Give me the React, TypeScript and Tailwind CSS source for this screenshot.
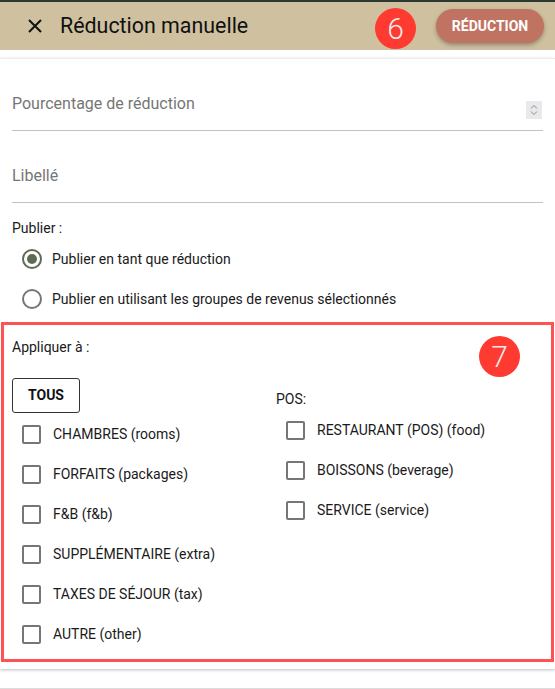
import React from "react";

const leftItems = [
  "CHAMBRES (rooms)",
  "FORFAITS (packages)",
  "F&B (f&b)",
  "SUPPLÉMENTAIRE (extra)",
  "TAXES DE SÉJOUR (tax)",
  "AUTRE (other)",
];
const rightItems = ["RESTAURANT (POS) (food)", "BOISSONS (beverage)", "SERVICE (service)"];

function Checkbox({ label }: { label: string }) {
  return (
    <div className="h-[40px] flex items-center">
      <div className="ml-[10px] w-[19px] h-[19px] border-2 border-[#767676] rounded-[2px] box-border" />
      <span className="ml-[12px] text-[14px] text-[#1a1a1a]">{label}</span>
    </div>
  );
}

function Badge({ n }: { n: string }) {
  return (
    <div className="w-[41px] h-[41px] rounded-full bg-[#ff3a30] flex items-center justify-center text-[#ececec] text-[30px] leading-none font-light">
      {n}
    </div>
  );
}

export default function App() {
  return (
    <div
      className="w-[555px] h-[689px] bg-white overflow-hidden relative"
      style={{ fontFamily: "Roboto, 'Liberation Sans', sans-serif" }}
    >
      <div className="h-[2px] bg-[#2e3832]" />
      <div className="h-[48px] bg-[#cfc09f] flex items-center">
        <svg className="ml-[28px]" width="14" height="14" viewBox="0 0 14 14">
          <path d="M1 1L13 13M13 1L1 13" stroke="#111" strokeWidth="2" />
        </svg>
        <span className="ml-[18px] text-[21.4px] text-[#111]">Réduction manuelle</span>
        <div className="absolute left-[375px] top-[8px]">
          <Badge n="6" />
        </div>
        <button className="absolute left-[436px] top-[9px] w-[108px] h-[34px] rounded-full bg-[#c07360] text-white text-[14px] font-bold shadow-[0_2px_4px_rgba(0,0,0,0.3)]">
          RÉDUCTION
        </button>
      </div>
      <div className="h-[8px]" />
      <div className="border-t border-[#ececec] shadow-[0_1px_3px_rgba(0,0,0,0.25)] h-[611px] flex flex-col">
        <div className="mx-[12px] mt-[32px] h-[40px] pt-[1px] border-b border-[#c2c2c2] flex items-start justify-between">
          <span className="text-[16px] text-[#767676] leading-[24px]">Pourcentage de réduction</span>
          <div className="mt-[9px] mr-[1px] w-[16px] h-[18px] bg-[#e9e9ec] flex flex-col items-center justify-center gap-[2px]">
            <svg width="8" height="5" viewBox="0 0 8 5">
              <path d="M1 4.5L4 1.5L7 4.5" stroke="#8a8a8a" strokeWidth="1" fill="none" />
            </svg>
            <svg width="8" height="5" viewBox="0 0 8 5">
              <path d="M1 0.5L4 3.5L7 0.5" stroke="#8a8a8a" strokeWidth="1" fill="none" />
            </svg>
          </div>
        </div>
        <div className="mx-[12px] mt-[32px] h-[40px] pt-[1px] border-b border-[#c2c2c2]">
          <span className="text-[16px] text-[#767676] leading-[24px]">Libellé</span>
        </div>
        <div className="mx-[12px] mt-[15px] text-[14px] leading-[20px] text-[#1a1a1a]">Publier :</div>
        <div className="mt-[1px] ml-[22px] h-[40px] flex items-center">
          <div className="w-[20px] h-[20px] rounded-full border-2 border-[#5e6a55] flex items-center justify-center box-border">
            <div className="w-[10px] h-[10px] rounded-full bg-[#5e6a55]" />
          </div>
          <span className="ml-[10px] text-[14px] text-[#1a1a1a]">Publier en tant que réduction</span>
        </div>
        <div className="ml-[22px] h-[40px] flex items-center">
          <div className="w-[20px] h-[20px] rounded-full border-2 border-[#767676] box-border" />
          <span className="ml-[10px] text-[14px] text-[#1a1a1a]">
            Publier en utilisant les groupes de revenus sélectionnés
          </span>
        </div>
        <div className="mt-[3px] mx-[1px] h-[340px] border-[3px] border-[#ff5252] relative px-[8px] pt-[12px]">
          <div className="absolute left-[475px] top-[11px]">
            <Badge n="7" />
          </div>
          <div className="text-[14px] leading-[20px] text-[#1a1a1a]">Appliquer à :</div>
          <div className="mt-[21px] grid grid-cols-[264px_1fr]">
            <div className="flex flex-col">
              <div>
                <button className="w-[68px] h-[35px] border border-[#333] rounded-[3px] text-[14px] font-bold text-[#111]">
                  TOUS
                </button>
              </div>
              <div className="mt-[1px]">
                {leftItems.map((l) => (
                  <Checkbox key={l} label={l} />
                ))}
              </div>
            </div>
            <div className="flex flex-col">
              <div className="mt-[11px] text-[14px] leading-[20px] text-[#1a1a1a]">POS:</div>
              <div className="mt-[1px]">
                {rightItems.map((l) => (
                  <Checkbox key={l} label={l} />
                ))}
              </div>
            </div>
          </div>
        </div>
      </div>
      <div className="mt-[19px] border-t border-[#dcdcdc] h-[10px]" />
    </div>
  );
}
